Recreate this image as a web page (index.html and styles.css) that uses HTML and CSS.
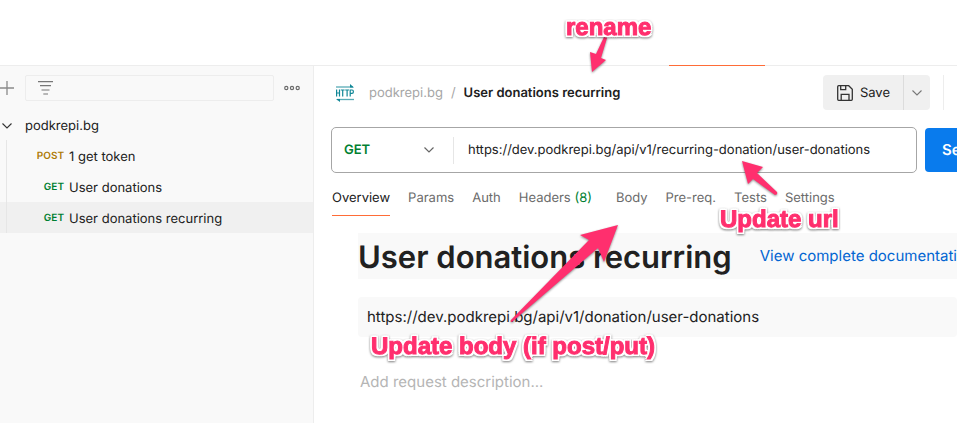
FILE: index.html
```html
<!DOCTYPE html>
<html lang="en">
<head>
<meta charset="utf-8">
<title>User donations recurring</title>
<link rel="stylesheet" href="styles.css">
</head>
<body>
<header class="tabstrip"><span class="tabstrip-active"></span></header>
<div class="workspace">
  <aside class="sidebar">
    <div class="filter-bar">
      <button class="icon-btn add-btn" aria-label="Add">
        <svg width="14" height="14" viewBox="0 0 14 14"><path d="M0 7H14M7 0V14" stroke="#8a8a8a" stroke-width="1.3"/></svg>
      </button>
      <label class="filter">
        <svg width="15" height="14" viewBox="0 0 15 14"><path d="M0 .6H15M2 4.700H13M3.500 9H11.500M5.300 13H10" stroke="#777" stroke-width="1.2"/></svg>
        <input type="text" aria-label="Filter requests">
      </label>
      <button class="icon-btn" aria-label="More options">
        <svg width="16" height="6" viewBox="0 0 16 6" fill="none" stroke="#6b6b6b" stroke-width="1.2"><circle cx="2.300" cy="3" r="1.600"/><circle cx="8" cy="3" r="1.600"/><circle cx="13.700" cy="3" r="1.600"/></svg>
      </button>
    </div>
    <button class="collection">
      <svg width="10" height="6" viewBox="0 0 10 6"><path d="M0.500 0.500L5 5L9.500 0.500" fill="none" stroke="#333" stroke-width="1.1"/></svg>
      <span>podkrepi.bg</span>
    </button>
    <nav class="requests">
      <a class="request" href="#"><span class="verb verb-post">POST</span>1 get token</a>
      <a class="request" href="#"><span class="verb">GET</span>User donations</a>
      <a class="request request-active" href="#"><span class="verb">GET</span>User donations recurring</a>
    </nav>
  </aside>
  <main class="main">
    <div class="title-row">
      <svg class="http" width="18" height="18" viewBox="0 0 18 18" fill="none" stroke="#118797"><path d="M0 3H17" stroke-width="1.300" opacity=".7"/><path d="M14 0L18 3.500H14Z" fill="#118797" stroke="none"/><path d="M1 15.500H18" stroke-width="1.300" opacity=".7"/><path d="M4 18L0 15H4Z" fill="#118797" stroke="none"/><path d="M0.600 5.500V12.500M3.500 5.500V12.500M0.600 9H3.500M4.800 6H8.600M6.700 6V12.500M9.200 6H13M11.100 6V12.500M14.200 12.500V6H16Q17.400 6 17.400 7.700Q17.400 9.400 16 9.400H14.200" stroke-width="1.200"/></svg>
      <div class="crumbs"><a href="#">podkrepi.bg</a><span>/</span><strong>User donations recurring</strong></div>
      <div class="save-group">
        <button class="save">
          <svg width="16" height="16" viewBox="0 0 16 16" fill="none" stroke="#333" stroke-width="1.300"><path d="M1.700 0.700H11.700L15.300 4.300V14.300Q15.300 15.300 14.300 15.300H1.700Q0.700 15.300 0.700 14.300V1.700Q0.700 0.700 1.700 0.700Z"/><path d="M3.700 1V4.600H8.700V1M4.200 15V9.300H12V15"/></svg>
          <span>Save</span>
        </button>
        <button class="save-more" aria-label="Save options">
          <svg width="10" height="6" viewBox="0 0 10 6"><path d="M0.500 0.500L5 5L9.500 0.500" fill="none" stroke="#777" stroke-width="1.100"/></svg>
        </button>
      </div>
      <span class="title-divider"></span>
    </div>
    <div class="url-row">
      <div class="url-box">
        <button class="method" aria-label="Method: GET">
          <span>GET</span>
          <svg width="10" height="6" viewBox="0 0 10 6"><path d="M0.500 0.500L5 5L9.500 0.500" fill="none" stroke="#666" stroke-width="1.200"/></svg>
        </button>
        <input class="url" type="text" aria-label="Request URL" value="https://dev.podkrepi.bg/api/v1/recurring-donation/user-donations">
      </div>
      <button class="send">Send</button>
    </div>
    <nav class="tabs">
      <a class="tab tab-active" href="#">Overview</a>
      <a class="tab" href="#">Params</a>
      <a class="tab" href="#">Auth</a>
      <a class="tab" href="#">Headers <span class="count">(8)</span></a>
      <a class="tab tab-body" href="#">Body</a>
      <a class="tab" href="#">Pre-req.</a>
      <a class="tab" href="#">Tests</a>
      <a class="tab" href="#">Settings</a>
    </nav>
    <section class="overview">
      <div class="heading"><h1>User donations recurring</h1><a href="#">View complete documentation</a></div>
      <div class="endpoint">https://dev.podkrepi.bg/api/v1/donation/user-donations</div>
      <p class="description">Add request description...</p>
    </section>
  </main>
</div>
<svg class="arrows" width="957" height="423" viewBox="0 0 957 423" fill="#ff2f6e" aria-hidden="true">
  <path d="M604 37Q606 36 607 38L601 58L606 60L592 72L590 52L596 54Z"/>
  <path d="M742 161L763 167L757 173L777 192Q778 195 775 195L753 179L748 184Z"/>
  <path d="M618 225L604 262L598 248L512 322Q510 322 511 320L589 240L580 235Z"/>
</svg>
<span class="note note-rename">rename</span>
<span class="note note-url">Update url</span>
<span class="note note-body">Update body (if post/put)</span>
</body>
</html>
```
FILE: styles.css
```css
* { box-sizing: border-box; }
body { margin: 0; min-height: 100vh; display: flex; flex-direction: column; position: relative; overflow: hidden; background: #fff; color: #212121; font: 13px/16px Inter, sans-serif; text-rendering: geometricPrecision; }
button, input { font: inherit; color: inherit; border: 0; padding: 0; background: none; outline: 0; text-rendering: inherit; }
a { color: inherit; text-decoration: none; }
svg { display: block; flex: none; }
.tabstrip { height: 66px; border-bottom: 1px solid #ededed; display: flex; align-items: flex-end; }
.tabstrip-active { width: 96px; height: 1px; margin-left: 669px; margin-bottom: -1px; background: #ff6c37; }
.workspace { flex: 1; display: flex; }
.sidebar { width: 314px; flex: none; background: #f9f9f9; border-right: 1px solid #ededed; }
.filter-bar { display: flex; align-items: center; padding-top: 9px; }
.icon-btn { display: flex; }
.add-btn { margin-right: 11px; }
.filter { width: 249px; height: 26px; display: flex; align-items: center; gap: 8px; padding: 0 12px; margin-right: 10px; border: 1px solid #ededed; border-radius: 2px; }
.filter input { flex: 1; min-width: 0; }
.collection { display: flex; align-items: center; gap: 13px; width: 100%; height: 31px; margin-top: 8px; padding: 2px 0 0 2px; }
.requests { position: relative; }
.requests::before { content: ""; position: absolute; left: 6px; top: 0; bottom: 0; width: 1px; background: #e6e6e6; }
.request { display: flex; align-items: center; gap: 5px; height: 31px; padding-top: 2px; }
.request-active { background: #f0f0f0; }
.verb { width: 64px; text-align: right; font-size: 10px; font-weight: 600; color: #007f31; padding-bottom: 2px; }
.verb-post { color: #ad7a03; }
.main { flex: 1; min-width: 0; overflow: hidden; padding-left: 17px; }
.title-row { display: flex; align-items: center; padding-top: 9px; }
.http { margin-left: 5px; margin-right: 15px; }
.crumbs { display: flex; gap: 8px; color: #a6a6a6; }
.crumbs strong { font-weight: 600; color: #212121; }
.save-group { display: flex; margin-left: auto; height: 35px; background: #f0f0f0; border-radius: 4px; }
.save { display: flex; align-items: center; gap: 7px; padding: 0 13px 0 14px; border-right: 1px solid #dcdcdc; }
.save-more { width: 26px; display: flex; align-items: center; justify-content: center; }
.title-divider { width: 1px; height: 35px; margin: 0 13px; background: #ededed; }
.url-row { display: flex; align-items: center; gap: 8px; margin-top: 17px; margin-right: -28px; }
.url-box { flex: 1; display: flex; align-items: center; height: 46px; border: 1px solid #a6a6a6; border-radius: 5px; }
.method { width: 122px; height: 27px; display: flex; align-items: center; justify-content: space-between; padding: 0 19px 0 12px; border-right: 1px solid #e6e6e6; color: #007f31; font-weight: 600; }
.url { flex: 1; min-width: 0; padding-left: 14px; }
.send { width: 60px; height: 44px; padding-left: 17px; text-align: left; background: #097bed; color: #fff; font-size: 15px; font-weight: 600; border-radius: 4px; overflow: hidden; }
.tabs { display: flex; gap: 18px; margin-top: 17px; padding-left: 1px; color: #6b6b6b; }
.tab { padding-bottom: 9px; border-bottom: 1px solid transparent; white-space: nowrap; }
.tab-active { color: #212121; border-color: #ff6c37; }
.tab-body { margin-left: 6px; }
.count { color: #007f31; }
.overview { padding-left: 27px; padding-top: 17px; white-space: nowrap; }
.heading { display: flex; align-items: center; gap: 28px; height: 46px; background: #f9f9f9; }
.heading h1 { margin: 0; padding-top: 3px; font-size: 31px; line-height: 44px; font-weight: 600; }
.heading a { color: #0265d2; font-size: 15px; }
.endpoint { margin-top: 18px; padding: 12px 9px; background: #f9f9f9; border-radius: 4px; font-size: 15px; }
.description { margin: 37px 2px 0; font-size: 15px; color: #b5b5b5; }
.arrows { position: absolute; left: 0; top: 0; filter: drop-shadow(0 1px 1px rgba(0,0,0,.45)); pointer-events: none; }
.note { position: absolute; font: bold 24px/28px "Liberation Sans", Arial, sans-serif; color: #ff2f6e; white-space: nowrap; -webkit-text-stroke: 1px #ff2f6e; text-shadow: 2px 0 #fff, -2px 0 #fff, 0 2px #fff, 0 -2px #fff, 2px 2px #fff, -2px 2px #fff, 2px -2px #fff, -2px -2px #fff; filter: drop-shadow(0 1px 1px rgba(0,0,0,.5)); }
.note-rename { left: 566px; top: 14px; }
.note-url { left: 720px; top: 206px; }
.note-body { left: 371px; top: 333px; }
```
